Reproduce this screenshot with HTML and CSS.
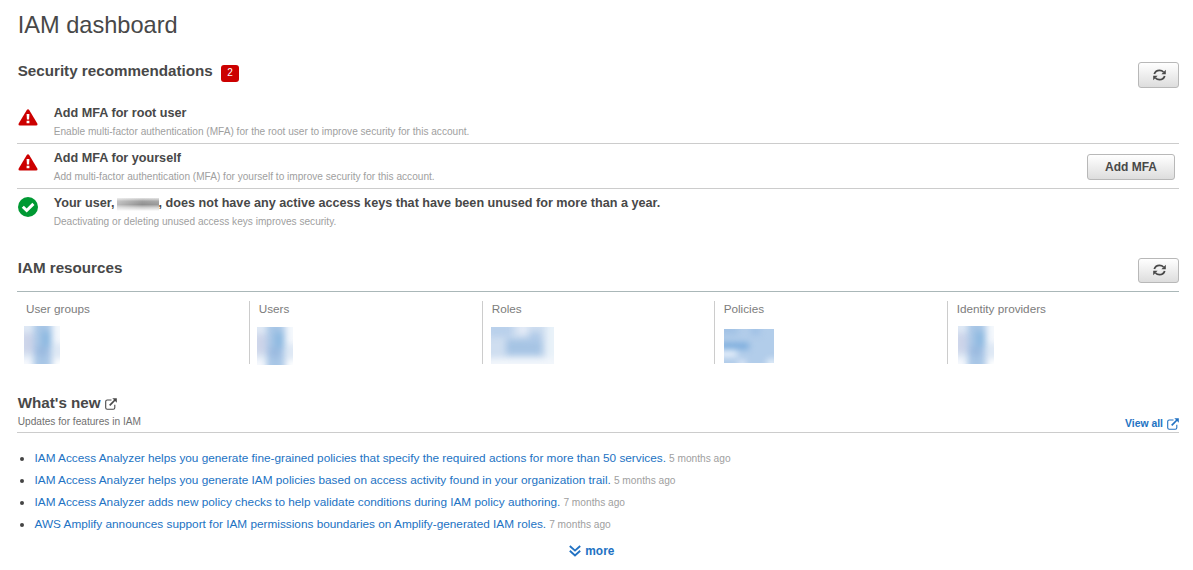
FILE: index.html
```html
<!DOCTYPE html>
<html lang="en">
<head>
<meta charset="utf-8">
<title>IAM dashboard</title>
<link rel="stylesheet" href="styles.css">
</head>
<body>
<svg class="defs" width="0" height="0">
  <defs>
    <filter id="soft" x="-30%" y="-30%" width="160%" height="160%" color-interpolation-filters="sRGB"><feGaussianBlur stdDeviation="3"/></filter>
    <symbol id="refresh" viewBox="0 0 13 12"><path d="M1.300 5C2 2.900 4 1.300 6.500 1.300c1.600 0 3 .6 4 1.700M11.700 7c-.7 2.100-2.700 3.700-5.200 3.700-1.600 0-3-.6-4-1.700" fill="none" stroke="currentColor" stroke-width="1.800"/><path d="M12.800.8V5.200H8.400zM.2 11.200V6.800H4.600z"/></symbol>
    <symbol id="external" viewBox="0 0 12 12"><path d="M6.500 2H2.300Q.7 2 .7 3.600V9.700Q.7 11.300 2.300 11.300H8.200Q9.800 11.300 9.800 9.700V6.800" fill="none" stroke="currentColor" stroke-width="1.100"/><path d="M4.700 7.300 10 2" fill="none" stroke="currentColor" stroke-width="1.700"/><path d="M7.300.3H11.800V4.800z"/></symbol>
    <symbol id="warning" viewBox="0 0 20 17"><path d="M8.800.9Q10 -.6 11.200.9L19.300 14.500Q20 16.500 18.200 16.500H1.800Q0 16.500.7 14.500z" fill="#c00"/><path d="M8.600 5h2.800l-.3 5.500H8.900zM8.600 11.800h2.800v2.500H8.600z" fill="#fff"/></symbol>
    <symbol id="digit" viewBox="0 0 36 38">
      <rect width="36" height="38" fill="#dfe9f5"/>
      <g filter="url(#soft)"><rect x="-4" y="7" width="15" height="20" fill="#ccd4e9"/><rect x="10" y="-10" width="17" height="58" fill="#a8c6e6"/><rect x="18" y="5" width="9" height="16" fill="#8cb8e0"/><rect x="11" y="21" width="14" height="9" fill="#9cbbe0"/><rect x="30" y="-8" width="14" height="25" fill="#f5f8fc"/><rect x="-8" y="33" width="16" height="14" fill="#f7f9fd"/><rect x="30" y="33" width="16" height="14" fill="#fff"/></g>
    </symbol>
  </defs>
</svg>
<main class="page">
  <h1>IAM dashboard</h1>

  <section class="security">
    <header class="bar">
      <h2>Security recommendations</h2><span class="badge">2</span>
      <button class="btn icon-btn" aria-label="Refresh"><svg><use href="#refresh"/></svg></button>
    </header>
    <div class="item">
      <svg class="status warn"><use href="#warning"/></svg>
      <div class="text"><h3>Add MFA for root user</h3><p>Enable multi-factor authentication (MFA) for the root user to improve security for this account.</p></div>
    </div>
    <div class="item">
      <svg class="status warn"><use href="#warning"/></svg>
      <div class="text"><h3>Add MFA for yourself</h3><p>Add multi-factor authentication (MFA) for yourself to improve security for this account.</p></div>
      <button class="btn add">Add MFA</button>
    </div>
    <div class="item">
      <svg class="status ok" viewBox="0 0 20 20"><circle cx="10" cy="10" r="10" fill="#093"/><path d="M4.800 9.700 8.700 13.500 15.400 6.900" fill="none" stroke="#fff" stroke-width="3"/></svg>
      <div class="text"><h3>Your user,<span class="redacted"></span>, does not have any active access keys that have been unused for more than a year.</h3><p>Deactivating or deleting unused access keys improves security.</p></div>
    </div>
  </section>

  <section class="resources">
    <header class="bar">
      <h2>IAM resources</h2>
      <button class="btn icon-btn" aria-label="Refresh"><svg><use href="#refresh"/></svg></button>
    </header>
    <div class="grid">
      <div class="cell groups"><span>User groups</span><svg class="count"><use href="#digit"/></svg></div>
      <div class="cell users"><span>Users</span><svg class="count"><use href="#digit"/></svg></div>
      <div class="cell roles"><span>Roles</span><svg class="count" viewBox="0 0 63 37"><rect width="63" height="37" fill="#cfdef0"/><g filter="url(#soft)"><rect x="-4" y="-5" width="25" height="15" fill="#b9d0eb"/><rect x="15" y="12" width="36" height="16" fill="#a6c4e4"/><rect x="38" y="5" width="12" height="10" fill="#b0cae8"/><rect x="27" y="-4" width="10" height="11" fill="#e5ecf7"/><rect x="55" y="-5" width="15" height="47" fill="#e9f2f9"/><rect x="-5" y="31" width="75" height="12" fill="#f2f6fb"/></g></svg></div>
      <div class="cell policies"><span>Policies</span><svg class="count" viewBox="0 0 50 34"><rect width="50" height="34" fill="#b2cdea"/><g filter="url(#soft)"><rect x="-6" y="-6" width="20" height="12" fill="#a2c2e5"/><rect x="-5" y="14" width="30" height="6" fill="#74a8db"/><rect x="-5" y="21" width="18" height="7" fill="#e9f1fb"/><rect x="27" y="-3" width="9" height="9" fill="#9fc0e5"/><rect x="14" y="31" width="8" height="8" fill="#dfe9f8"/><rect x="43" y="30" width="10" height="10" fill="#e5effa"/></g></svg></div>
      <div class="cell providers"><span>Identity providers</span><svg class="count"><use href="#digit"/></svg></div>
    </div>
  </section>

  <section class="news">
    <header>
      <div><h2>What's new <svg class="ext"><use href="#external"/></svg></h2><p>Updates for features in IAM</p></div>
      <a class="viewall"><span>View all</span> <svg class="ext"><use href="#external"/></svg></a>
    </header>
    <ul>
      <li><a>IAM Access Analyzer helps you generate fine-grained policies that specify the required actions for more than 50 services.</a> <time>5 months ago</time></li>
      <li><a>IAM Access Analyzer helps you generate IAM policies based on access activity found in your organization trail.</a> <time>5 months ago</time></li>
      <li><a>IAM Access Analyzer adds new policy checks to help validate conditions during IAM policy authoring.</a> <time>7 months ago</time></li>
      <li><a>AWS Amplify announces support for IAM permissions boundaries on Amplify-generated IAM roles.</a> <time>7 months ago</time></li>
    </ul>
    <div class="more"><svg viewBox="0 0 12 12"><path d="M.8 1 6 5.600 11.200 1M.8 5.800 6 10.500 11.200 5.800" fill="none" stroke="currentColor" stroke-width="1.900"/></svg><a>more</a></div>
  </section>
</main>
</body>
</html>
```
FILE: styles.css
```css
* { box-sizing: border-box; }
body { margin: 0; background: #fff; color: #484848; font-family: "Liberation Sans", Arial, sans-serif; }
h1, h2, h3, p, ul { margin: 0; padding: 0; }
svg { fill: currentColor; display: block; flex: none; }
.defs { height: 0; }
.page { width: 1193px; height: 570px; padding: 9px 14px 0 17.700px; overflow: hidden; white-space: nowrap; }
h1 { font-size: 23.600px; line-height: 32px; font-weight: 400; }
h2 { font-size: 15.200px; line-height: 18px; font-weight: 700; }
.bar { display: flex; align-items: flex-start; }
.security .bar { height: 58px; padding-top: 21px; }
.badge { width: 18px; height: 17px; margin: 3px 0 0 8.400px; border-radius: 3px; background: #c00; color: #fff; font-size: 10px; line-height: 15px; text-align: center; }
.btn { margin: 0 0 0 auto; padding: 0; border: 1px solid #b8b8b8; border-radius: 3px; background: linear-gradient(#fff, #ddd); color: #484848; font: 700 11.800px "Liberation Sans", Arial, sans-serif; }
.icon-btn { width: 41px; height: 26px; display: flex; align-items: center; justify-content: center; }
.icon-btn svg { width: 13px; height: 12px; margin: 0 0 1px 1px; }
.resources .icon-btn { height: 25px; }
.add { width: 88px; height: 26px; margin: 10px 4px 0 auto; font-size: 12px; }
.item { height: 45px; display: flex; align-items: flex-start; margin-left: -1px; padding-left: 1px; border-bottom: 1px solid #ccc; }
.item:last-child { border-bottom: 0; }
.status { width: 20px; margin-right: 16px; }
.warn { height: 17px; margin-top: 10px; }
.ok { height: 20px; margin-top: 8px; }
.item h3 { font-size: 12.630px; line-height: 16px; padding-top: 6px; font-weight: 700; }
.item p { font-size: 10.100px; line-height: 14px; margin-top: 4px; color: #a0a0a0; }
.redacted { display: inline-block; width: 42px; height: 13px; margin-left: 2px; vertical-align: -4px; background: linear-gradient(90deg, rgba(255,255,255,.4), rgba(255,255,255,0) 60%, rgba(255,255,255,.1)), linear-gradient(#e4e4e4 0, #a0a0a0 25%, #909090 50%, #ccc 72%, #fff); }
.resources .bar { height: 58px; padding-top: 24px; margin-left: -1px; padding-left: 1px; border-bottom: 1px solid #aab7b8; }
.resources h2 { padding-top: 1px; }
.grid { display: grid; grid-template-columns: 231.300px 233px 232px 233px 232px; padding-top: 9px; }
.cell { height: 63px; padding-left: 8.700px; border-left: 1px solid #ccc; font-size: 11.720px; line-height: 16px; color: #7c7c7c; }
.cell:first-child { border: 0; padding-left: 8.300px; }
.count { width: 36px; height: 38px; margin: 9px 0 0 -2px; }
.users .count { margin: 10px 0 0 -1.700px; }
.roles .count { width: 63px; height: 37px; margin: 10px 0 0 -.7px; }
.policies .count { width: 50px; height: 34px; margin: 12px 0 0 .3px; }
.providers .count { margin-left: 1.300px; }
.news header { display: flex; justify-content: space-between; height: 69px; padding-top: 30px; margin-left: -1px; padding-left: 1px; border-bottom: 1px solid #ccc; }
.news h2 { display: flex; gap: 5px; align-items: center; }
.ext { width: 12px; height: 12px; }
.news h2 .ext { margin: 1px 0 0 -.4px; }
.news p { font-size: 10.140px; line-height: 14px; margin-top: 3px; color: #707070; }
.viewall { display: flex; gap: 4px; align-items: center; height: 14px; margin-top: 23px; font-size: 10.400px; font-weight: 700; }
.viewall span { margin-top: -2px; }
a, .more { color: #2272c3; text-decoration: none; }
.news ul { list-style: none; padding-top: 14px; }
.news li { height: 22px; line-height: 22px; font-size: 11.800px; display: flex; align-items: baseline; gap: 3px; }
.news li::before { content: ""; width: 4px; height: 4px; margin: 10px 7.500px 0 2.300px; align-self: flex-start; border-radius: 50%; background: #444; }
time { font-size: 10.180px; color: #a0a0a0; }
.more { display: flex; gap: 4.500px; align-items: center; justify-content: center; height: 16px; margin-top: 8px; padding-right: 13.500px; font-size: 11.900px; font-weight: 700; }
.more svg { width: 12px; height: 12px; }
```
